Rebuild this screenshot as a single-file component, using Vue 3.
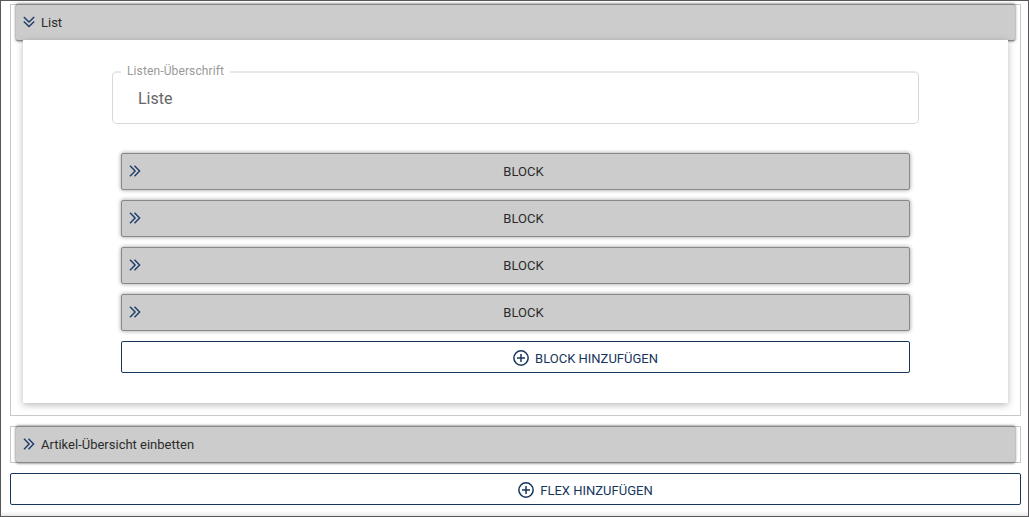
<script setup>
const blocks = ['BLOCK', 'BLOCK', 'BLOCK', 'BLOCK']
</script>

<template>
  <main class="page">
    <section class="group">
      <header class="bar group-bar">
        <svg class="chevrons" viewBox="0 0 12 12"><path d="M.8 1 6 6.100 11.200 1M.8 5.500 6 10.600 11.200 5.500" /></svg>
        <span>List</span>
      </header>
      <div class="panel">
        <div class="field">
          <span class="field-label">Listen-Überschrift</span>
          <span class="field-value">Liste</span>
        </div>
        <div class="blocks">
          <div v-for="(block, i) in blocks" :key="i" class="bar block">
            <svg class="chevrons" viewBox="0 0 12 12"><path d="M1 .8 6.100 6 1 11.200M5.500 .8 10.600 6 5.500 11.200" /></svg>
            <span class="block-title">{{ block }}</span>
          </div>
          <button class="add add-block">
            <svg viewBox="0 0 16 16"><circle cx="8" cy="8" r="7.150" /><path d="M8 4v8M4 8h8" /></svg>
            <span>BLOCK HINZUFÜGEN</span>
          </button>
        </div>
      </div>
    </section>
    <section class="group closed">
      <header class="bar group-bar">
        <svg class="chevrons" viewBox="0 0 12 12"><path d="M1 .8 6.100 6 1 11.200M5.500 .8 10.600 6 5.500 11.200" /></svg>
        <span>Artikel-Übersicht einbetten</span>
      </header>
    </section>
    <button class="add add-flex">
      <svg viewBox="0 0 16 16"><circle cx="8" cy="8" r="7.150" /><path d="M8 4v8M4 8h8" /></svg>
      <span>FLEX HINZUFÜGEN</span>
    </button>
  </main>
</template>

<style scoped>
* {
  box-sizing: border-box;
}
.page {
  width: 1029px;
  height: 517px;
  padding: 3px 7px 0 9px;
  border: 1px solid #59575a;
  background: linear-gradient(to top, #e9e9e9, #fff 5px);
  font: 13px/20px Roboto, "Liberation Sans", sans-serif;
  color: #2b2b2b;
  overflow: hidden;
}
.group {
  height: 412px;
  border: 1px solid #c8c8c8;
}
.closed {
  height: 37px;
  margin-top: 10px;
}
.bar {
  display: flex;
  align-items: center;
  height: 37px;
  background: #ccc;
  border: 1px solid #888;
  border-radius: 2px;
  box-shadow: 0 0 4px rgba(0, 0, 0, .4);
}
.group-bar {
  margin: -1px 5px 0;
  padding-left: 7px;
  gap: 6px;
  border-width: 1px 0;
  box-shadow: 0 0 3px rgba(0, 0, 0, .7);
}
.chevrons {
  width: 12px;
  height: 12px;
  flex: none;
  fill: none;
  stroke: #1d3c6a;
  stroke-width: 1.4;
  margin-bottom: 1px;
}
.panel {
  position: relative;
  height: 363px;
  margin: -1px 12px 0;
  padding: 31px 89px 0;
  background: #fff;
  box-shadow: 0 2px 7px rgba(0, 0, 0, .28);
}
.field {
  position: relative;
  width: 807px;
  height: 53px;
  padding: 16px 25px 0;
  border: 1px solid #d8d8d8;
  border-top: 2px solid #e8e8e8;
  border-radius: 5px;
}
.field-label {
  position: absolute;
  top: -12px;
  left: 8px;
  padding: 0 6px;
  background: #fff;
  font-size: 12px;
  line-height: 20px;
  letter-spacing: .12px;
  white-space: nowrap;
  color: #999;
}
.field-value {
  display: block;
  font-size: 16px;
  color: #666;
}
.blocks {
  display: flex;
  flex-direction: column;
  gap: 10px;
  width: 789px;
  margin: 29px 0 0 9px;
}
.block {
  padding: 0 7px;
}
.block-title {
  flex: 1;
  text-align: center;
  padding-left: 4px;
}
.add {
  display: flex;
  align-items: center;
  justify-content: center;
  gap: 6px;
  width: 100%;
  height: 32px;
  padding: 2px 0 0;
  border: 1px solid #17365d;
  border-radius: 2px;
  background: #fff;
  color: #17365d;
  font: inherit;
}
.add svg {
  width: 16px;
  height: 16px;
  fill: none;
  stroke: #17365d;
  stroke-width: 1.5;
}
.add span {
  padding-top: 2px;
}
.add-block {
  padding-left: 140px;
}
.add-flex {
  margin-top: 10px;
  padding-left: 140px;
}
</style>
<style>
body {
  background: #fff;
}
</style>
